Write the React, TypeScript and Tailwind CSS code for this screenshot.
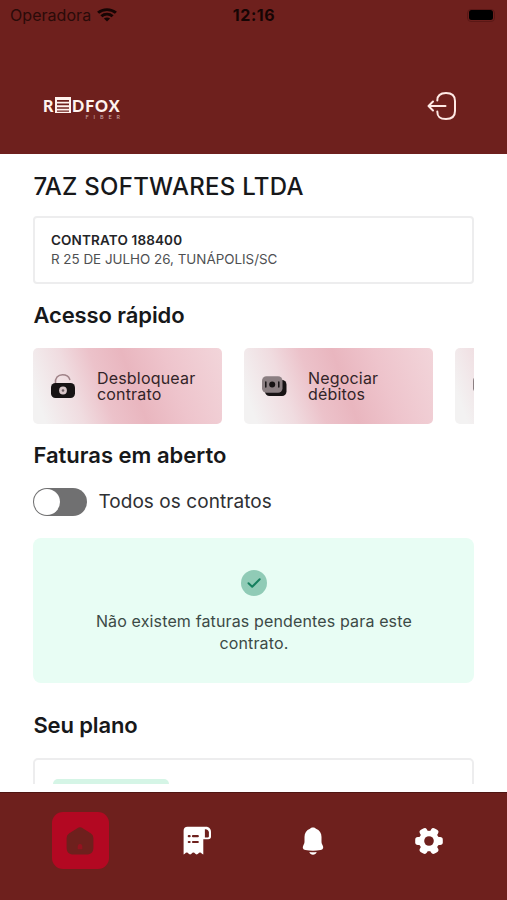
import type { ReactNode } from 'react'

function WifiIcon() {
  return (
    <svg width="20" height="14" viewBox="0 0 20 15" preserveAspectRatio="none" fill="none" stroke="#160504" strokeWidth="3">
      <path d="M1.100 5.200C6 .6 14 .6 18.900 5.200" />
      <path d="M4.400 8.900c3.200-3 8-3 11.200 0" />
      <path d="M10 14.400 6.900 11.300c1.700-1.500 4.500-1.500 6.200 0Z" fill="#160504" stroke="none" />
    </svg>
  )
}

function Logo() {
  return (
    <svg width="80" height="25" viewBox="0 0 80 25" fill="#fff3ee">
      <text x="0" y="14.500" className="font-['Lato'] text-[16px] font-black">R</text>
      <path d="M12 0h16v16H12ZM14 3v1.700h12V3ZM14 6.600v1.600h12V6.600ZM14 10.200v1.600h12v-1.600ZM14 13.500v1.200h12v-1.200Z" fillRule="evenodd" />
      <text x="29" y="14.500" textLength="47.500" lengthAdjust="spacing" className="font-['Lato'] text-[16px] font-black">DFOX</text>
      <text x="42.500" y="21.500" textLength="34.500" lengthAdjust="spacing" className="font-['Lato'] text-[5.500px] opacity-65">FIBER</text>
    </svg>
  )
}

function LogoutIcon() {
  return (
    <svg width="30" height="30" viewBox="0 0 30 30" fill="none" stroke="#ffe9e5" strokeWidth="2" strokeLinecap="round" strokeLinejoin="round">
      <path d="M10.300 9.500C10.300 4.200 12.800 2 19 2s9 2.800 9 8v10c0 5.200-2.600 8-9 8s-8.700-2.200-8.700-7.500" />
      <path d="M18.500 15H2M6 10.500 1.500 15 6 19.500" />
    </svg>
  )
}

function LockIcon() {
  return (
    <svg width="26" height="26" viewBox="0 0 26 26" fill="none">
      <path d="M5.500 10.500C4.800 5 8 1.800 12.500 1.800c3.700 0 6.200 1.600 7.300 4.600" stroke="#a08388" strokeWidth="1.500" strokeLinecap="round" />
      <rect x="1" y="10" width="24" height="15" rx="4.500" fill="#171314" />
      <circle cx="13" cy="17.500" r="3.900" fill="#d9c6c9" />
      <circle cx="13" cy="17.500" r="1.300" fill="#6b5d60" />
    </svg>
  )
}

function MoneyIcon() {
  return (
    <svg className="shrink-0" width="26" height="22" viewBox="0 0 26 22" fill="none">
      <rect x="4" y="5" width="21.500" height="16" rx="4.500" fill="#171314" />
      <rect x="1" y="1.200" width="20.500" height="16.500" rx="4.500" fill="#8b7f82" />
      <circle cx="11.200" cy="9.500" r="3" fill="#171314" />
      <path d="M4.800 7v5M17.800 7v5" stroke="#171314" strokeWidth="1.500" strokeLinecap="round" />
    </svg>
  )
}

function HomeIcon() {
  return (
    <svg width="28" height="28" viewBox="0 0 28 28">
      <path
        d="M11.300 1.200a5 5 0 0 1 5.400 0l8 5A5.500 5.500 0 0 1 27.400 11v9.500c0 4.800-2.200 7-7 7H7.600c-4.800 0-7-2.200-7-7V11a5.500 5.500 0 0 1 2.700-4.800Z"
        fill="#6e201d"
      />
      <path d="M14 17c1.600 0 2.300 1 2.300 2.500v2.700h-4.600v-2.700c0-1.500.7-2.500 2.300-2.500Z" fill="#94121f" />
    </svg>
  )
}

function BillIcon() {
  return (
    <svg width="28" height="29" viewBox="0 0 28 29">
      <path
        d="M4.500.8H23c3 0 5 2.200 5 5.200v4.500c0 1.700-1 2.700-2.700 2.700h-5V28.500c-1.500 0-1.700-1.900-3.300-1.900s-1.700 1.900-3.300 1.900-1.700-1.900-3.300-1.900-1.700 1.900-3.300 1.900-1.700-1.900-3.300-1.900S2 28.500.6 28.500V4.800c0-2.500 1.400-4 3.900-4Z"
        fill="#fff"
      />
      <path d="M21.900 3.300c2.300-.2 4 1.100 4 3.200v3.700c0 .8-.4 1.200-1.200 1.200h-2.800Z" fill="#6e201d" />
      <path d="M5.800 10.200h.8M10 10.200h4.800M5.800 16h.8M10 16h4.800" stroke="#6e201d" strokeWidth="2.200" strokeLinecap="round" />
    </svg>
  )
}

function BellIcon() {
  return (
    <svg width="22" height="28" viewBox="0 0 22 28" fill="#fff">
      <path d="M11 .5c1.200 0 2.300.5 3 1.300 3.600 1.300 5.500 4.500 5.500 8.200v4.500c0 1.500.4 2.500 1.100 3.800 1.300 2.500.6 4.200-2 4.800-4.900 1-10.300 1-15.200 0-2.600-.6-3.300-2.300-2-4.800.7-1.300 1.100-2.300 1.100-3.800V10C2.500 6.300 4.400 3.100 8 1.800 8.700 1 9.800.5 11 .5Z" />
      <path d="M7.300 25c2.500.3 4.900.3 7.400 0-.6 1.700-2 2.700-3.700 2.700S7.900 26.700 7.300 25Z" />
    </svg>
  )
}

const toothAngles = [0, 60, 120, 180, 240, 300]

function GearIcon() {
  return (
    <svg width="28" height="28" viewBox="0 0 28 28" fill="#fff">
      <circle cx="14" cy="14" r="10.300" />
      {toothAngles.map((angle) => (
        <rect key={angle} x="20" y="10" width="7.800" height="8" rx="2.700" transform={`rotate(${angle} 14 14)`} />
      ))}
      <circle cx="14" cy="14" r="4.800" fill="#6e201d" />
    </svg>
  )
}

function QuickCard({ icon, lines = [] }: { icon: ReactNode; lines?: string[] }) {
  return (
    <div className="flex h-[76px] w-[189px] shrink-0 items-center rounded-[5px] bg-[linear-gradient(70deg,#f3f2f2_6%,#f0dce0_24%,#ecc2ca_38%,#e9b6bf_53%,#eec4cc_72%,#f2d5da_100%)] pl-[17px]">
      {icon}
      <div className="ml-[20.500px] text-[16px] leading-[16px] tracking-[0.200px] text-[#332428]">
        {lines.map((line) => (
          <p key={line}>{line}</p>
        ))}
      </div>
    </div>
  )
}

export default function App() {
  return (
    <div className="flex h-[900px] w-[507px] flex-col overflow-hidden bg-white font-['Inter','Liberation_Sans',sans-serif] text-[#17181a]">
      {/* Header */}
      <header className="h-[154px] shrink-0 bg-[#6e201d]">
        <div className="grid h-[30px] grid-cols-3 items-center pr-[12px] pl-[10px] text-[#160504]">
          <div className="flex items-center gap-[6px]">
            <span className="text-[16px] tracking-[0.050px] text-[#2a0b09]">Operadora</span>
            <WifiIcon />
          </div>
          <span className="pl-[3px] text-center text-[16px] font-bold tracking-[0.550px]">12:16</span>
          <div className="flex h-[13px] w-[28px] items-center justify-center justify-self-end rounded-[4px] border border-[#5a1715]">
            <div className="h-[10px] w-[24px] rounded-[2.500px] bg-black" />
          </div>
        </div>
        <div className="flex items-start justify-between pt-[61px] pr-[50px] pl-[43px]">
          <div className="pt-[6px]">
            <Logo />
          </div>
          <LogoutIcon />
        </div>
      </header>

      {/* Scroll area */}
      <main className="h-[630px] shrink-0 overflow-hidden pr-[32.600px] pl-[33.400px]">
        <h1 className="mt-[17px] text-[24px] leading-[32px] font-medium tracking-[0.260px] whitespace-nowrap">7AZ SOFTWARES LTDA</h1>

        <section className="mt-[13px] h-[68px] rounded-[4px] border-2 border-[#ededee] px-[15.600px] pt-[13px]">
          <p className="text-[13.500px] leading-[19px] font-semibold tracking-[0.150px] text-[#242528]">CONTRATO 188400</p>
          <p className="text-[13.400px] leading-[19px] text-[#4e4f52]">R 25 DE JULHO 26, TUNÁPOLIS/SC</p>
        </section>

        <h2 className="mt-[16px] text-[22px] leading-[30px] font-semibold tracking-[-0.100px]">Acesso rápido</h2>
        <div className="mt-[18px] flex gap-[22px] overflow-hidden">
          <QuickCard icon={<LockIcon />} lines={['Desbloquear', 'contrato']} />
          <QuickCard icon={<MoneyIcon />} lines={['Negociar', 'débitos']} />
          <QuickCard icon={<MoneyIcon />} />
        </div>

        <h2 className="mt-[16px] text-[22px] leading-[30px] font-semibold">Faturas em aberto</h2>
        <div className="mt-[18px] flex items-center gap-[11px]">
          <div className="h-[28px] w-[54px] rounded-full bg-[#707071] p-px">
            <div className="size-[26px] rounded-full bg-white" />
          </div>
          <span className="text-[19px] leading-[28px] tracking-[0.060px] text-[#2f3033]">Todos os contratos</span>
        </div>

        <section className="mt-[22px] flex h-[145px] flex-col items-center rounded-[8px] bg-[#e8fdf4] pt-[32px]">
          <svg width="26" height="26" viewBox="0 0 26 26" fill="none">
            <circle cx="13" cy="13" r="13" fill="#90cbb6" />
            <path d="m7.500 13.200 3.700 3.600L18.700 9.300" stroke="#16805f" strokeWidth="2" strokeLinecap="round" strokeLinejoin="round" />
          </svg>
          <p className="mt-[14px] text-center text-[16px] leading-[22px] tracking-[0.140px] text-[#3c4a46]">
            Não existem faturas pendentes para este
            <br />
            contrato.
          </p>
        </section>

        <h2 className="mt-[27px] text-[22px] leading-[30px] font-semibold tracking-[-0.120px]">Seu plano</h2>
        <section className="mt-[18px] h-[120px] rounded-[5px] border-2 border-[#ededee] px-[18px] pt-[19px]">
          <div className="h-[26px] w-[116px] rounded-[5px] bg-[#d5f5e6]" />
        </section>
      </main>

      {/* Bottom tabs */}
      <nav className="mt-[8px] flex h-[108px] shrink-0 items-start border-t border-[#4f1512] bg-[#6e201d] pt-[19px] pl-[51.500px]">
        <div className="flex size-[57px] items-center justify-center rounded-[11px] bg-[#b30822]">
          <HomeIcon />
        </div>
        <div className="ml-[74.500px] flex h-[57px] items-center">
          <BillIcon />
        </div>
        <div className="ml-[91px] flex h-[57px] items-center">
          <BellIcon />
        </div>
        <div className="ml-[91px] flex h-[57px] items-center">
          <GearIcon />
        </div>
      </nav>
    </div>
  )
}
